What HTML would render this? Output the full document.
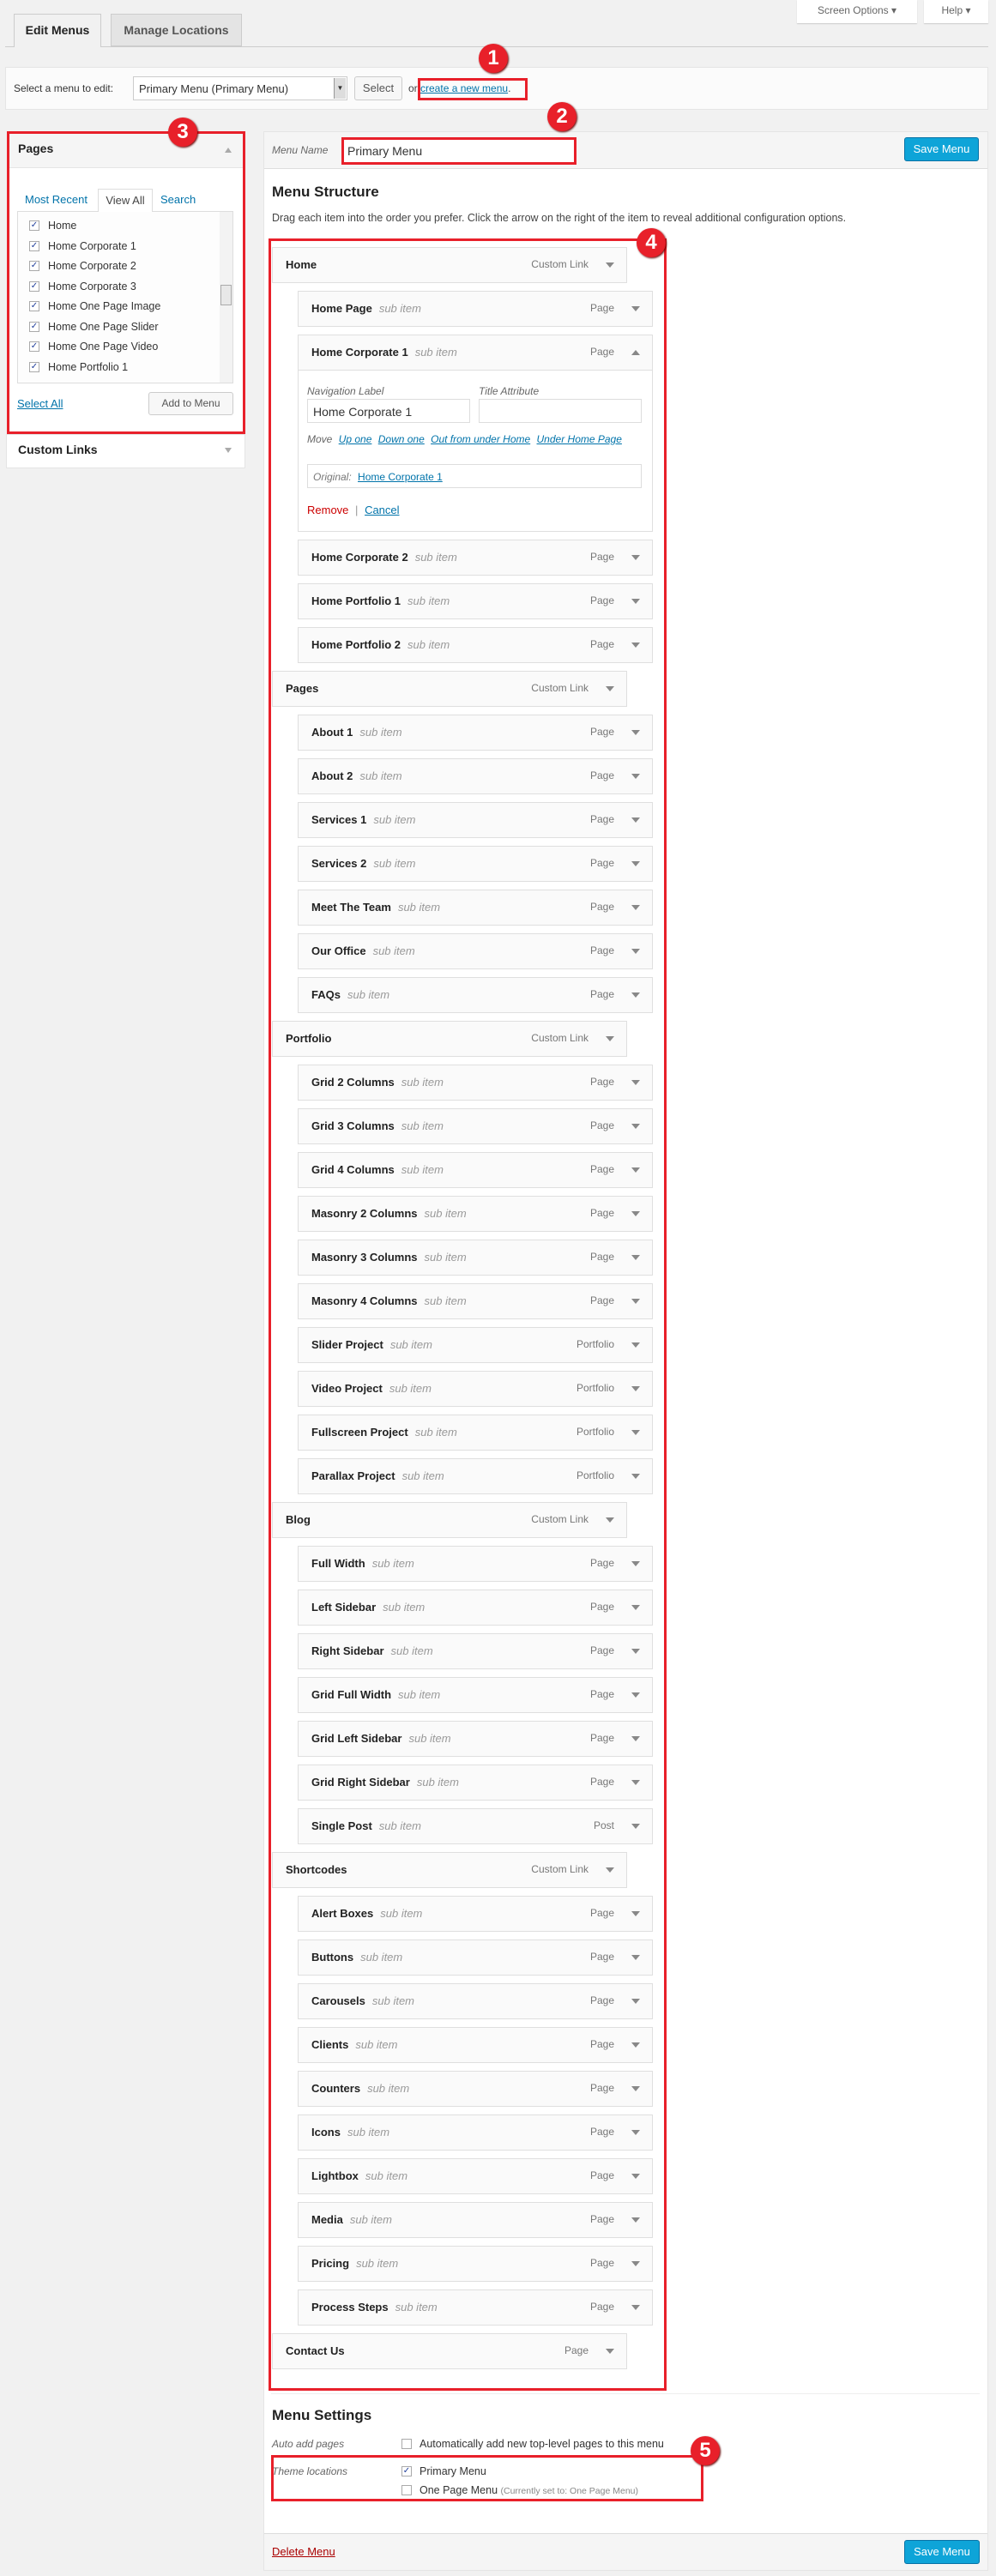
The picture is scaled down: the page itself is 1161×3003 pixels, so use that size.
<!DOCTYPE html>
<html><head><meta charset="utf-8"><style>
*{box-sizing:border-box;margin:0;padding:0}
body{width:1161px;height:3003px;background:#f1f1f1;font-family:"Liberation Sans",sans-serif;font-size:13px;color:#444;position:relative;overflow:hidden}
.a{position:absolute}
.it{position:absolute;height:42px;width:414px;background:#fafafa;border:1px solid #dfdfdf;}
.it b{position:absolute;left:15px;top:12px;font-size:13px;color:#222}
.it i{color:#999;font-weight:normal;margin-left:8px}
.it .t{position:absolute;right:44px;top:12px;color:#777;font-size:12px}
.it .ar{position:absolute;right:14px;top:17px;width:0;height:0;border-left:5px solid transparent;border-right:5px solid transparent;border-top:6px solid #888}
.tl{left:317px}.sb{left:347px}
.badge{position:absolute;width:34px;height:34px;border-radius:50%;background:#e8202a;color:#fff;font-weight:bold;font-size:24px;text-align:center;line-height:34px;box-shadow:1px 1px 2px #600}
.red{position:absolute;border:3px solid #e8202a}
.cb{position:absolute;width:12px;height:12px;border:1px solid #aaa;background:#fff;font-size:10px;line-height:10px;text-align:center;color:#1e3c9a}
a{color:#0073aa}
.btn{position:absolute;background:#f7f7f7;border:1px solid #ccc;border-radius:3px;color:#555;text-align:center}
.blue{position:absolute;background:#0ea4d8;border:1px solid #0873a6;border-radius:3px;color:#fff;text-align:center}
</style></head><body>
<!-- top -->
<div class="a" style="left:929px;top:0;width:140px;height:27px;background:#fff;box-shadow:0 1px 1px #ccc;color:#666;font-size:12px;text-align:center;line-height:24px">Screen Options ▾</div>
<div class="a" style="left:1077px;top:0;width:75px;height:27px;background:#fff;box-shadow:0 1px 1px #ccc;color:#666;font-size:12px;text-align:center;line-height:24px">Help ▾</div>
<div class="a" style="left:6px;top:54px;width:1146px;height:1px;background:#ccc"></div>
<div class="a" style="left:16px;top:16px;width:102px;height:39px;background:#f1f1f1;border:1px solid #ccc;border-bottom:none;font-weight:bold;font-size:14px;color:#222;line-height:36px;text-align:center">Edit Menus</div>
<div class="a" style="left:129px;top:16px;width:153px;height:38px;background:#e4e4e4;border:1px solid #ccc;font-weight:bold;font-size:14px;color:#555;line-height:36px;text-align:center">Manage Locations</div>
<!-- select bar -->
<div class="a" style="left:6px;top:78px;width:1146px;height:50px;background:#fbfbfb;border:1px solid #e5e5e5"></div>
<div class="a" style="left:16px;top:96px;font-size:12px;color:#333">Select a menu to edit:</div>
<div class="a" style="left:155px;top:89px;width:250px;height:28px;background:#fff;border:1px solid #ccc;font-size:13px;padding:6px 6px;color:#333">Primary Menu (Primary Menu)<span style="position:absolute;right:1px;top:1px;width:14px;height:24px;background:#ddd;border-left:1px solid #999;font-size:8px;line-height:24px;text-align:center">▼</span></div>
<div class="btn" style="left:413px;top:89px;width:56px;height:28px;line-height:26px">Select</div>
<div class="a" style="left:476px;top:96px;font-size:12px">or <a href="#" style="color:#0073aa">create a new menu</a>.</div>
<div class="red" style="left:487px;top:91px;width:128px;height:26px"></div>
<div class="badge" style="left:558px;top:51px">1</div>
<!-- left panel -->
<div class="a" style="left:8px;top:154px;width:278px;height:352px;background:#fff;border:1px solid #e5e5e5"></div>
<div class="a" style="left:10px;top:156px;width:274px;height:40px;background:#f5f5f5;border-bottom:1px solid #e5e5e5"></div>
<div class="a" style="left:21px;top:165px;font-weight:bold;font-size:14px;color:#222">Pages</div>
<div class="a" style="left:262px;top:172px;border-left:4px solid transparent;border-right:4px solid transparent;border-bottom:6px solid #aaa"></div>
<div class="a" style="left:29px;top:225px;color:#0073aa">Most Recent</div>
<div class="a" style="left:114px;top:220px;width:64px;height:27px;background:#fff;border:1px solid #ddd;border-bottom:none;color:#444;text-align:center;padding-top:5px;z-index:2">View All</div>
<div class="a" style="left:187px;top:225px;color:#0073aa">Search</div>
<div class="a" style="left:20px;top:246px;width:252px;height:201px;background:#fdfdfd;border:1px solid #ddd"></div>
<div class="a" style="left:256px;top:247px;width:15px;height:199px;background:#f3f3f3"></div>
<div class="a" style="left:257px;top:332px;width:13px;height:24px;background:#e8e8e8;border:1px solid #aaa"></div>
<div id="pl"></div>
<div class="a" style="left:20px;top:463px"><a href="#">Select All</a></div>
<div class="btn" style="left:173px;top:457px;width:99px;height:27px;line-height:25px;font-size:12px">Add to Menu</div>
<div class="red" style="left:8px;top:153px;width:278px;height:353px"></div>
<div class="badge" style="left:196px;top:137px">3</div>
<div class="a" style="left:7px;top:506px;width:279px;height:40px;background:#fff;border:1px solid #e5e5e5"></div>
<div class="a" style="left:21px;top:516px;font-weight:bold;font-size:14px;color:#222">Custom Links</div>
<div class="a" style="left:262px;top:522px;border-left:4px solid transparent;border-right:4px solid transparent;border-top:6px solid #aaa"></div>
<!-- right panel -->
<div class="a" style="left:307px;top:153px;width:845px;height:2844px;background:#fff;border:1px solid #e5e5e5"></div>
<div class="a" style="left:308px;top:154px;width:843px;height:43px;background:#f5f5f5;border-bottom:1px solid #ddd"></div>
<div class="a" style="left:317px;top:168px;font-style:italic;color:#666;font-size:12px">Menu Name</div>
<div class="a" style="left:400px;top:162px;width:270px;height:28px;background:#fff;border:1px solid #ddd;padding:5px 4px;font-size:14px;color:#333">Primary Menu</div>
<div class="red" style="left:398px;top:160px;width:274px;height:32px"></div>
<div class="badge" style="left:638px;top:119px">2</div>
<div class="blue" style="left:1054px;top:160px;width:87px;height:28px;line-height:26px">Save Menu</div>
<div class="a" style="left:317px;top:214px;font-weight:bold;font-size:17px;color:#222">Menu Structure</div>
<div class="a" style="left:317px;top:247px;font-size:12.5px;color:#444">Drag each item into the order you prefer. Click the arrow on the right of the item to reveal additional configuration options.</div>
<!-- items -->
<div class="it tl" style="top:288px"><b>Home</b><span class="t">Custom Link</span><span class="ar"></span></div>
<div class="it sb" style="top:339px"><b>Home Page<i>sub item</i></b><span class="t">Page</span><span class="ar"></span></div>
<div class="it sb" style="top:390px;height:230px;background:#fff"></div>
<div class="it sb" style="top:390px"><b>Home Corporate 1<i>sub item</i></b><span class="t">Page</span><span class="ar" style="border-top:none;border-bottom:6px solid #888"></span></div>
<div class="a" style="left:358px;top:449px;font-style:italic;color:#666;font-size:12px">Navigation Label</div>
<div class="a" style="left:558px;top:449px;font-style:italic;color:#666;font-size:12px">Title Attribute</div>
<div class="a" style="left:358px;top:465px;width:190px;height:28px;border:1px solid #ddd;padding:6px;font-size:14px;color:#333">Home Corporate 1</div>
<div class="a" style="left:558px;top:465px;width:190px;height:28px;border:1px solid #ddd"></div>
<div class="a" style="left:358px;top:505px;font-style:italic;color:#666;font-size:12px">Move <a href="#" style="margin-left:4px">Up one</a> <a href="#" style="margin-left:4px">Down one</a> <a href="#" style="margin-left:4px">Out from under Home</a> <a href="#" style="margin-left:4px">Under Home Page</a></div>
<div class="a" style="left:358px;top:541px;width:390px;height:28px;border:1px solid #ddd;padding:7px 6px;font-size:12px"><i style="color:#777">Original:</i> <a href="#" style="margin-left:4px">Home Corporate 1</a></div>
<div class="a" style="left:358px;top:587px;font-size:13px"><span style="color:#c00">Remove</span> <span style="color:#999;margin:0 4px">|</span> <a href="#">Cancel</a></div>
<div class="it sb" style="top:629px"><b>Home Corporate 2<i>sub item</i></b><span class="t">Page</span><span class="ar"></span></div>
<div class="it sb" style="top:680px"><b>Home Portfolio 1<i>sub item</i></b><span class="t">Page</span><span class="ar"></span></div>
<div class="it sb" style="top:731px"><b>Home Portfolio 2<i>sub item</i></b><span class="t">Page</span><span class="ar"></span></div>
<div id="rest"></div>
<div class="red" style="left:313px;top:278px;width:464px;height:2509px"></div>
<div class="badge" style="left:742px;top:266px">4</div>
<div class="a" style="left:316px;top:2790px;width:826px;height:1px;background:#eee"></div>
<div class="a" style="left:317px;top:2806px;font-weight:bold;font-size:17px;color:#222">Menu Settings</div>
<div class="a" style="left:317px;top:2842px;font-style:italic;color:#666;font-size:12px">Auto add pages</div>
<div class="cb" style="left:468px;top:2843px"></div>
<div class="a" style="left:489px;top:2842px;font-size:12.5px;color:#333">Automatically add new top-level pages to this menu</div>
<div class="a" style="left:317px;top:2874px;font-style:italic;color:#666;font-size:12px">Theme locations</div>
<div class="cb" style="left:468px;top:2875px">✓</div>
<div class="a" style="left:489px;top:2874px;font-size:12.5px;color:#333">Primary Menu</div>
<div class="cb" style="left:468px;top:2897px"></div>
<div class="a" style="left:489px;top:2896px;font-size:12.5px;color:#333">One Page Menu <span style="font-size:10.5px;color:#888">(Currently set to: One Page Menu)</span></div>
<div class="red" style="left:316px;top:2862px;width:504px;height:54px"></div>
<div class="badge" style="left:805px;top:2840px">5</div>
<div class="a" style="left:308px;top:2953px;width:843px;height:43px;background:#f5f5f5;border-top:1px solid #ddd"></div>
<div class="a" style="left:317px;top:2967px"><a href="#" style="color:#a00">Delete Menu</a></div>
<div class="blue" style="left:1054px;top:2961px;width:88px;height:28px;line-height:26px">Save Menu</div>
<script>
var p=["Home","Home Corporate 1","Home Corporate 2","Home Corporate 3","Home One Page Image","Home One Page Slider","Home One Page Video","Home Portfolio 1"],h="";
p.forEach(function(t,i){var y=257+i*23.5;h+='<div class="cb" style="left:34px;top:'+y+'px">✓</div><div class="a" style="left:56px;top:'+(y-1)+'px;font-size:12.5px;color:#333">'+t+'</div>';});
document.getElementById("pl").outerHTML=h;
var L=[["Pages",1,"Custom Link"],["About 1"],["About 2"],["Services 1"],["Services 2"],["Meet The Team"],["Our Office"],["FAQs"],["Portfolio",1,"Custom Link"],["Grid 2 Columns"],["Grid 3 Columns"],["Grid 4 Columns"],["Masonry 2 Columns"],["Masonry 3 Columns"],["Masonry 4 Columns"],["Slider Project",0,"Portfolio"],["Video Project",0,"Portfolio"],["Fullscreen Project",0,"Portfolio"],["Parallax Project",0,"Portfolio"],["Blog",1,"Custom Link"],["Full Width"],["Left Sidebar"],["Right Sidebar"],["Grid Full Width"],["Grid Left Sidebar"],["Grid Right Sidebar"],["Single Post",0,"Post"],["Shortcodes",1,"Custom Link"],["Alert Boxes"],["Buttons"],["Carousels"],["Clients"],["Counters"],["Icons"],["Lightbox"],["Media"],["Pricing"],["Process Steps"],["Contact Us",2,"Page"]];
h="";L.forEach(function(e,i){var top=782+51*i,tl=e[1]>0;h+='<div class="it '+(tl?'tl':'sb')+'" style="top:'+top+'px"><b>'+e[0]+(tl?'':'<i>sub item</i>')+'</b><span class="t">'+(e[2]||"Page")+'</span><span class="ar"></span></div>';});
document.getElementById("rest").outerHTML=h;
</script>
</body></html>
